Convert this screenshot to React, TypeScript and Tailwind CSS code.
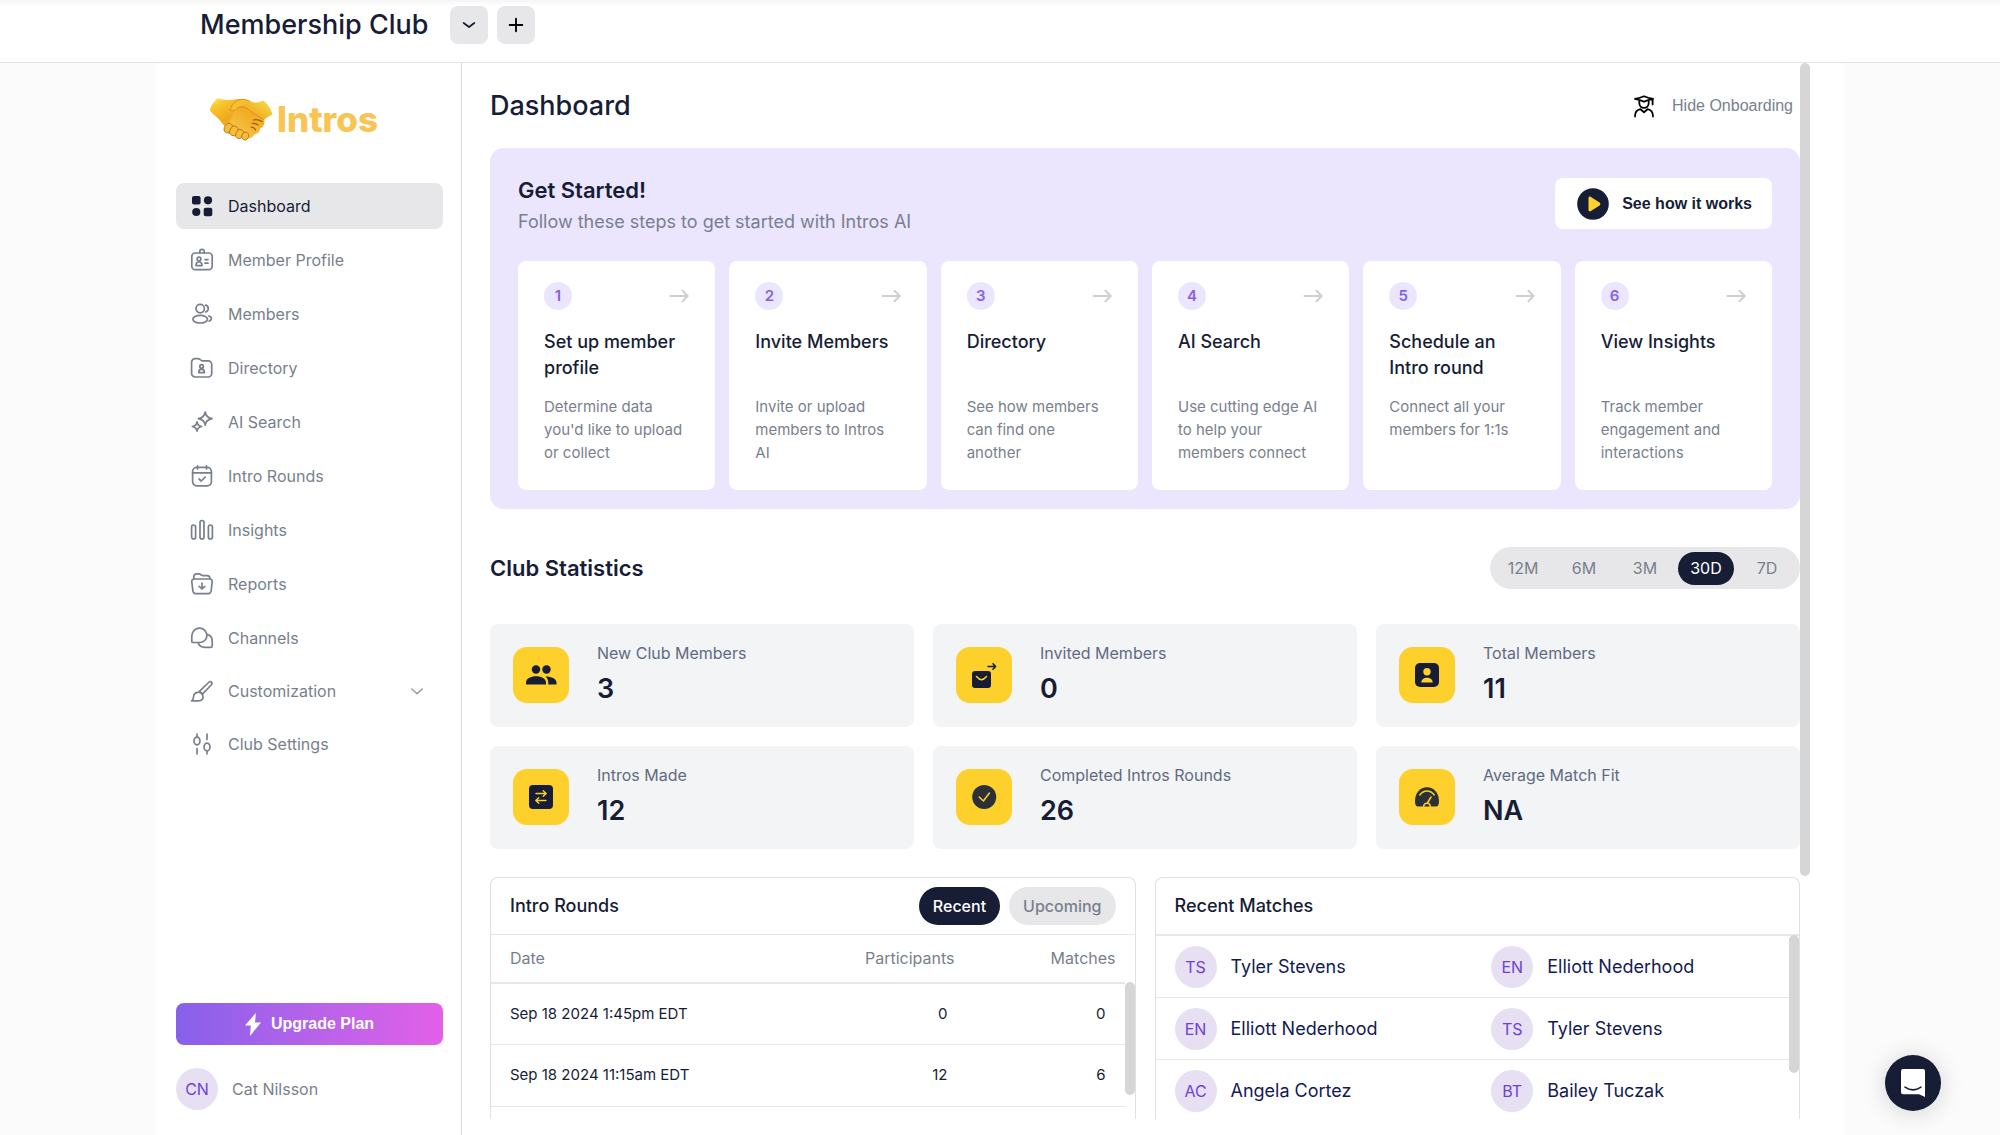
import type { ReactNode } from "react";

type IconProps = { className?: string; children: ReactNode };

function LineIcon({ className = "size-6", children }: IconProps) {
  return (
    <svg
      viewBox="0 0 24 24"
      className={className}
      fill="none"
      stroke="currentColor"
      strokeWidth="1.7"
      strokeLinecap="round"
      strokeLinejoin="round"
      aria-hidden="true"
    >
      {children}
    </svg>
  );
}

const navItems: { label: string; icon: ReactNode; expandable?: boolean }[] = [
  {
    label: "Dashboard",
    icon: (
      <g fill="currentColor" stroke="none">
        <rect x="2" y="2" width="8.6" height="8.6" rx="2" />
        <circle cx="18" cy="6.3" r="4.1" />
        <circle cx="6.3" cy="18" r="4.1" />
        <rect x="13.7" y="13.7" width="8.6" height="8.6" rx="2" />
      </g>
    ),
  },
  {
    label: "Member Profile",
    icon: (
      <>
        <rect x="1.8" y="5" width="20.4" height="16.6" rx="3.4" />
        <path d="M9.8 4.8V3.6a2.2 2.2 0 0 1 4.4 0v1.2" />
        <circle cx="9" cy="11" r="1.9" />
        <path d="M6 17.6c0-2.4 1.2-3.6 3-3.6s3 1.2 3 3.6Z" />
        <path d="M15 11.6h3M15 15.2h3" />
      </>
    ),
  },
  {
    label: "Members",
    icon: (
      <>
        <circle cx="10.2" cy="6.6" r="4.2" />
        <ellipse cx="10.2" cy="17.2" rx="7.3" ry="3.8" />
        <path d="M15.6 3.2a3.5 3.5 0 0 1 0 6.8" />
        <path d="M18.8 14c1.6.5 2.6 1.4 2.6 2.6 0 1.1-.8 2-2.2 2.5" />
      </>
    ),
  },
  {
    label: "Directory",
    icon: (
      <>
        <path d="M1.6 17.4V6.2A3.6 3.6 0 0 1 5.2 2.6h2.5c1 0 1.9.4 2.6 1.1l.6.5c.5.4 1.1.7 1.8.7h5.4a3.6 3.6 0 0 1 3.6 3.6v8.9a3.6 3.6 0 0 1-3.6 3.6H5.2a3.6 3.6 0 0 1-3.6-3.6Z" />
        <circle cx="11.6" cy="10.4" r="1.8" />
        <path d="M8.8 16.6c0-2.2 1.1-3.4 2.8-3.4s2.8 1.2 2.8 3.4Z" />
      </>
    ),
  },
  {
    label: "AI Search",
    icon: (
      <>
        <path d="M15.2 2c.6 4 2.3 5.9 6.8 6.6-4.5.7-6.2 2.6-6.8 6.6-.6-4-2.3-5.900-6.800-6.600 4.500-.700 6.200-2.600 6.800-6.600Z" />
        <path d="M7 11.800c.4 2.800 1.600 4.200 4.600 4.700-3 .5-4.200 1.900-4.600 4.700-.4-2.800-1.600-4.200-4.600-4.700 3-.5 4.200-1.900 4.600-4.700Z" />
      </>
    ),
  },
  {
    label: "Intro Rounds",
    icon: (
      <>
        <rect x="2.600" y="3.400" width="18.800" height="18.400" rx="4.200" />
        <path d="M2.600 8.800h18.800M7.500 1.800v3.200M16.500 1.800v3.200" />
        <path d="m9 15 2.200 2 4-3.800" />
      </>
    ),
  },
  {
    label: "Insights",
    icon: (
      <>
        <rect x="1.600" y="7" width="4" height="14" rx="2" />
        <rect x="10" y="2.500" width="4" height="18.500" rx="2" />
        <rect x="18.400" y="7" width="4" height="14" rx="2" />
      </>
    ),
  },
  {
    label: "Reports",
    icon: (
      <>
        <path d="M1.800 9.600c-.2-1.500.8-2.600 2.200-2.600h16c1.400 0 2.400 1.100 2.200 2.600l-1 8.700c-.2 2-1.700 3.400-3.700 3.400h-11c-2 0-3.500-1.400-3.700-3.400Z" />
        <path d="M3.800 6.800V5a3.200 3.200 0 0 1 3.200-3.200h1.800c.9 0 1.700.4 2.300 1l.3.2c.4.4 1 .6 1.600.6h4c1.700 0 3 1.300 3 3.200" />
        <path d="M12 11v5.800M9.200 14.300 12 17l2.800-2.700" />
      </>
    ),
  },
  {
    label: "Channels",
    icon: (
      <>
        <path d="M1.800 15.600V9.800a7.800 7.800 0 0 1 7.800-7.600 7.300 7.300 0 0 1 7.300 7.300c0 4-3.300 7-7.300 7H2.700a.9.900 0 0 1-.9-.9Z" />
        <path d="M17 8.400c3 .7 5.200 3.300 5.200 6.500v5.200c0 .7-.5 1.200-1.200 1.200h-6c-3.300 0-6-1.800-6.900-4.600" />
      </>
    ),
  },
  {
    label: "Customization",
    expandable: true,
    icon: (
      <>
        <path d="M1.600 21.800c2-1 1.700-2.300 1.900-4.300a4.800 4.800 0 0 1 9.200-1.300c1.200 3.200-.8 5.600-4.300 5.600Z" />
        <path d="m9.600 12.200 2.800 3 8.800-9.200c.9-1 1.200-1.900.3-2.800s-1.900-.6-2.800.3Z" />
      </>
    ),
  },
  {
    label: "Club Settings",
    icon: (
      <>
        <ellipse cx="7" cy="9" rx="3" ry="3.800" />
        <path d="M7 2.200v3M7 16.500v5.300" />
        <ellipse cx="17" cy="15" rx="3" ry="3.800" />
        <path d="M17 2.200v5.300M17 18.800v3" />
      </>
    ),
  },
];

const steps = [
  { title: "Set up member profile", text: "Determine data you'd like to upload or collect" },
  { title: "Invite Members", text: "Invite or upload members to Intros AI" },
  { title: "Directory", text: "See how members can find one another" },
  { title: "AI Search", text: "Use cutting edge AI to help your members connect" },
  { title: "Schedule an Intro round", text: "Connect all your members for 1:1s" },
  { title: "View Insights", text: "Track member engagement and interactions" },
];

const navy = "#161d35";
const yellow = "#fdd02c";

const stats: { label: string; value: string; icon: ReactNode }[] = [
  {
    label: "New Club Members",
    value: "3",
    icon: (
      <g fill={navy}>
        <circle cx="23" cy="22.500" r="4.200" />
        <circle cx="33.500" cy="22.500" r="4.200" />
        <path d="M13 37.600v-2c0-4 4.500-6.400 10-6.400s10 2.400 10 6.400v2Z" />
        <path d="M35.300 37.600v-2.200c0-2.500-1-4.500-2.800-6 6 0 11 2.200 11 6.200v2Z" />
      </g>
    ),
  },
  {
    label: "Invited Members",
    value: "0",
    icon: (
      <>
        <rect x="16" y="24" width="19" height="17" rx="3" fill={navy} />
        <path d="M20.500 29.500c3.600 4.300 6.400 4.300 10 0" fill="none" stroke={yellow} strokeWidth="1.500" strokeLinecap="round" />
        <path d="M32 19.500h7.500M37 16.800l2.600 2.700-2.600 2.700" fill="none" stroke={navy} strokeWidth="1.600" strokeLinecap="round" strokeLinejoin="round" />
      </>
    ),
  },
  {
    label: "Total Members",
    value: "11",
    icon: (
      <>
        <rect x="16" y="16" width="24" height="24" rx="5" fill={navy} />
        <g fill={yellow}>
          <circle cx="28" cy="24.800" r="3.700" />
          <path d="M22.300 35.500c0-3 2.500-4.800 5.700-4.800s5.700 1.800 5.700 4.800Z" />
        </g>
      </>
    ),
  },
  {
    label: "Intros Made",
    value: "12",
    icon: (
      <>
        <rect x="16" y="16" width="24" height="24" rx="4" fill={navy} />
        <path d="M23 24.500h10M30.200 21.700l3 2.800-3 2.800M33 31.500H23M25.800 28.700l-3 2.800 3 2.800" fill="none" stroke={yellow} strokeWidth="1.400" strokeLinecap="round" strokeLinejoin="round" />
      </>
    ),
  },
  {
    label: "Completed Intros Rounds",
    value: "26",
    icon: (
      <>
        <circle cx="28.200" cy="28" r="12" fill="#2d3137" />
        <path d="m23.200 28 4.200 4 6-8" fill="none" stroke={yellow} strokeWidth="1.500" strokeLinecap="round" strokeLinejoin="round" />
      </>
    ),
  },
  {
    label: "Average Match Fit",
    value: "NA",
    icon: (
      <>
        <path d="M19 37.500c-2 0-3-1.600-3-5.200C16 24 21 18.300 28 18.300s12 5.700 12 14c0 3.600-1 5.200-3 5.200Z" fill="#2d3137" />
        <g fill="none" stroke={yellow} strokeWidth="1.500" strokeLinecap="round">
          <path d="M20.800 26c3.800-5.400 10.600-5.400 14.400 0" />
          <path d="M28.400 34 32 28" />
          <path d="M24.600 37.500c.5-4.200 6.300-4.200 6.800 0" />
        </g>
      </>
    ),
  },
];

const ranges = ["12M", "6M", "3M", "30D", "7D"];

const rounds = [
  { date: "Sep 18 2024 1:45pm EDT", participants: 0, matches: 0 },
  { date: "Sep 18 2024 11:15am EDT", participants: 12, matches: 6 },
];

const matches = [
  ["Tyler Stevens", "Elliott Nederhood"],
  ["Elliott Nederhood", "Tyler Stevens"],
  ["Angela Cortez", "Bailey Tuczak"],
];

function Avatar({ name }: { name: string }) {
  const initials = name
    .split(" ")
    .map((word) => word[0])
    .join("");
  return (
    <span className="flex size-[42px] shrink-0 items-center justify-center rounded-full bg-[#e7e0f3] text-base text-[#6f3fd6]">
      {initials}
    </span>
  );
}

function Handshake() {
  return (
    <svg viewBox="0 0 64 44" className="h-11 w-16 shrink-0" aria-hidden="true">
      <defs>
        <linearGradient id="hand-left" x1="0" y1="0" x2="0.700" y2="1">
          <stop offset="0" stopColor="#fff06a" />
          <stop offset="0.250" stopColor="#f8c62c" />
          <stop offset="0.650" stopColor="#f0a81e" />
          <stop offset="1" stopColor="#f6b93c" />
        </linearGradient>
        <linearGradient id="hand-right" x1="1" y1="0" x2="0.200" y2="1">
          <stop offset="0" stopColor="#fbe04a" />
          <stop offset="0.450" stopColor="#f0ac24" />
          <stop offset="1" stopColor="#fbc74a" />
        </linearGradient>
      </defs>
      <path
        d="M8.500 1.200C5 4 1.500 9 .8 13.500c3.500 4.500 7.500 6.500 10.500 10.500 2 3 4.500 5 7.500 8L40 31l-6-27.500c-3-2-7-1.800-10-.8C18.500 3.500 14 2.500 8.500 1.200Z"
        fill="url(#hand-left)"
      />
      <path
        d="M54 3.500c4 2.500 8 8 9.500 14-3 1.500-6 3-8.500 5.500 1.500 4-1 7.500-4 8.500 0 3-2.500 5.500-5.500 5.500-1 3-4 5-7.500 4.500L18 30l12-24c3-3 8-4 12-1.500 4 2 8 1 12-1Z"
        fill="url(#hand-right)"
      />
      <path d="M29 10.500c-1.500 3.500-4 5-7.500 3.500-.5-4 2-8 6-10.500 4-2 9-2.500 13 .5" fill="#f7be30" />
      <path
        d="M40 4c-5-2.500-9-2-12.500 0-4 2.500-6 5.500-6 9.500 3.500 1 6-.5 8-3.500 4-.5 8 .5 11 3.500 4 3.500 9 5.500 14 9"
        fill="none"
        stroke="#d98c1a"
        strokeWidth="0.900"
        strokeLinecap="round"
      />
      <path
        d="M43 26.500c2.500-.5 4 0 6 1.500M44.500 23c3-1 6 0 8.500 1.500M42 30c2 0 3.500 1 4.500 3"
        fill="none"
        stroke="#9c5a0c"
        strokeWidth="1.200"
        strokeLinecap="round"
      />
      <g fill="#f7bd3a" stroke="#a8660f" strokeWidth="0.700">
        <rect x="15.500" y="26" width="7.500" height="10" rx="3.700" transform="rotate(24 19 31)" />
        <rect x="21" y="29" width="7.500" height="10" rx="3.700" transform="rotate(28 25 34)" />
        <rect x="27" y="32" width="7" height="9.500" rx="3.500" transform="rotate(28 30 37)" />
        <rect x="33" y="35" width="6.500" height="8" rx="3.200" transform="rotate(24 36 39)" />
      </g>
    </svg>
  );
}

function Sidebar() {
  return (
    <aside className="flex w-[305px] shrink-0 flex-col border-r border-[#dcdce0] pr-[18px] pl-[19px] text-[#797f8d]">
      <a href="#home" className="mt-8 ml-[33px] flex h-12 items-center gap-1" aria-label="Intros home">
        <Handshake />
        <span className="text-[35px] leading-none font-extrabold text-[#f8c454]">Intros</span>
      </a>
      <nav aria-label="Main" className="mt-10 flex flex-col gap-2">
        {navItems.map((item, i) => (
          <a
            key={item.label}
            href="#nav"
            aria-current={i === 0 ? "page" : undefined}
            className={
              i === 0
                ? "flex h-[46px] items-center gap-[14px] rounded-lg bg-[#e7e7e9] px-[14px] text-base text-[#161d35]"
                : item.expandable
                  ? "flex h-11 items-center gap-[14px] rounded-lg px-[14px] text-base"
                  : "flex h-[46px] items-center gap-[14px] rounded-lg px-[14px] text-base"
            }
          >
            <LineIcon className="size-6 shrink-0">{item.icon}</LineIcon>
            <span className="grow">{item.label}</span>
            {item.expandable && (
              <LineIcon className="mr-1 size-4 text-[#9a9eaa]">
                <path d="m4 9 8 7 8-7" strokeWidth="2.200" />
              </LineIcon>
            )}
          </a>
        ))}
      </nav>
      <div className="mt-auto pb-[25px]">
        <button
          type="button"
          className="flex h-[42px] w-full items-center justify-center gap-[10px] rounded-lg bg-linear-to-r from-[#8660ea] to-[#e35fe8] font-['Liberation_Sans',sans-serif] text-base font-bold text-white"
        >
          <svg viewBox="0 0 16 23" className="h-[23px] w-4" fill="currentColor" aria-hidden="true">
            <path d="M10.800 0 0 12.600h5.800L5 23 16 9.400h-5.900Z" />
          </svg>
          Upgrade Plan
        </button>
        <a href="#account" className="mt-[23px] flex items-center gap-[14px] text-base">
          <Avatar name="Cat Nilsson" />
          Cat Nilsson
        </a>
      </div>
    </aside>
  );
}

function GetStarted() {
  return (
    <section className="rounded-[14px] bg-[#ebe5fe] px-7 pt-[30px] pb-[19px]">
      <div className="flex items-start justify-between">
        <div>
          <h2 className="text-[22px] leading-6 font-semibold">Get Started!</h2>
          <p className="mt-2 text-lg leading-6 text-[#797f8d]">Follow these steps to get started with Intros AI</p>
        </div>
        <button
          type="button"
          className="flex h-[51px] items-center gap-[13px] rounded-lg bg-white pr-5 pl-[22px] font-['Liberation_Sans',sans-serif] text-base font-bold"
        >
          <svg viewBox="0 0 32 32" className="size-8" aria-hidden="true">
            <circle cx="16" cy="16" r="15.800" fill={navy} />
            <path d="M11.500 10.200c0-1.300 1.300-2 2.400-1.300l8.700 5.700c1 .7 1 2.100 0 2.800l-8.700 5.700c-1.100.7-2.400 0-2.400-1.300Z" fill={yellow} />
          </svg>
          See how it works
        </button>
      </div>
      <ol className="mt-[27px] grid grid-cols-6 gap-[14px]">
        {steps.map((step, i) => (
          <li key={step.title}>
            <a href="#step" className="block h-[229px] rounded-lg bg-white px-[26px] pt-[21px]">
              <div className="flex items-center justify-between">
                <span className="flex size-7 items-center justify-center rounded-full bg-[#ebe5fe] text-[15px] font-semibold text-[#8660ea]">
                  {i + 1}
                </span>
                <svg
                  viewBox="0 0 20 14"
                  className="h-[14px] w-5"
                  fill="none"
                  stroke="#cfcfd2"
                  strokeWidth="2"
                  strokeLinecap="round"
                  strokeLinejoin="round"
                  aria-hidden="true"
                >
                  <path d="M1.500 7h17M13.500 1.800 18.700 7l-5.200 5.200" />
                </svg>
              </div>
              <h3 className="mt-[19px] h-[52px] text-lg leading-[26px] font-medium">{step.title}</h3>
              <p className="mt-[14px] text-[15px] leading-[23px] text-[#797f8d]">{step.text}</p>
            </a>
          </li>
        ))}
      </ol>
    </section>
  );
}

function Statistics() {
  return (
    <section>
      <div className="mt-[38px] flex items-center justify-between">
        <h2 className="text-[22px] leading-6 font-semibold">Club Statistics</h2>
        <div role="group" aria-label="Period" className="flex h-[42px] items-center gap-[5px] rounded-full bg-[#e7e7e9] px-[5px]">
          {ranges.map((range) => (
            <button
              key={range}
              type="button"
              aria-pressed={range === "30D"}
              className={
                range === "30D"
                  ? "h-[33px] w-14 rounded-full bg-[#161d35] text-base text-white"
                  : "h-[33px] w-14 rounded-full text-base text-[#797f8d]"
              }
            >
              {range}
            </button>
          ))}
        </div>
      </div>
      <div className="mt-[35px] grid grid-cols-3 gap-[19px]">
        {stats.map((stat) => (
          <div key={stat.label} className="flex h-[103px] items-start rounded-lg bg-[#f3f4f6] px-[23px] pt-[18px]">
            <svg viewBox="0 0 56 56" className="mt-[5px] size-14 shrink-0" aria-hidden="true">
              <rect width="56" height="56" rx="14" fill={yellow} />
              {stat.icon}
            </svg>
            <div className="ml-7">
              <div className="text-base leading-[22px] text-[#626a82]">{stat.label}</div>
              <div className="mt-[9px] text-[27px] leading-8 font-semibold">{stat.value}</div>
            </div>
          </div>
        ))}
      </div>
    </section>
  );
}

function IntroRounds() {
  return (
    <section className="relative overflow-hidden rounded-t-lg border border-b-0 border-[#dfe0e4]">
      <header className="flex h-14 items-center justify-between px-[19px]">
        <h2 className="text-lg font-medium">Intro Rounds</h2>
        <div className="flex gap-[9px]">
          <button type="button" className="h-[38px] rounded-full bg-[#161d35] px-[14px] text-base font-medium text-white">
            Recent
          </button>
          <button type="button" className="h-[38px] rounded-full bg-[#e7e7e9] px-[14px] text-base font-medium text-[#797f8d]">
            Upcoming
          </button>
        </div>
      </header>
      <table className="w-full border-collapse text-base">
        <thead>
          <tr className="h-12 border-t border-b-2 border-t-[#e7e7e9] border-b-[#e7e7e9] text-[#797f8d]">
            <th className="pl-[19px] text-left font-normal">Date</th>
            <th className="text-right font-normal">Participants</th>
            <th className="w-[180px] pr-[19px] text-right font-normal">Matches</th>
          </tr>
        </thead>
        <tbody>
          {rounds.map((round) => (
            <tr key={round.date} className="h-[62px] border-b border-[#e7e7e9] text-[15px]">
              <td className="pl-[19px]">{round.date}</td>
              <td className="pr-[7px] text-right">{round.participants}</td>
              <td className="pr-[29px] text-right">{round.matches}</td>
            </tr>
          ))}
        </tbody>
      </table>
      <div className="absolute top-[104px] right-0 bottom-0 w-[10px] bg-white">
        <div className="h-[113px] rounded-full bg-[#d6d6d6]" />
      </div>
    </section>
  );
}

function RecentMatches() {
  return (
    <section className="relative overflow-hidden rounded-t-lg border border-b-0 border-[#dfe0e4]">
      <header className="flex h-[58px] items-center border-b-2 border-[#e7e7e9] pl-[19px]">
        <h2 className="text-lg font-medium">Recent Matches</h2>
      </header>
      <ul className="pr-[10px] text-lg text-[#141a52]">
        {matches.map((pair) => (
          <li key={pair[0]} className="grid h-[62px] grid-cols-2 border-b border-[#e7e7e9]">
            {pair.map((name) => (
              <a key={name} href="#member" className="flex items-center gap-[14px] pl-[19px]">
                <Avatar name={name} />
                {name}
              </a>
            ))}
          </li>
        ))}
      </ul>
      <div className="absolute top-[57px] right-0 bottom-0 w-[10px]">
        <div className="h-[138px] rounded-full bg-[#d6d6d6]" />
      </div>
    </section>
  );
}

export default function App() {
  return (
    <div className="flex h-screen flex-col overflow-hidden bg-[#fbfbfb] font-[Inter,sans-serif] text-[#161d35]">
      <header className="h-[63px] shrink-0 border-b border-[#e2e3e8] bg-linear-to-b from-[#f6f6f6] to-white to-10%">
        <div className="mx-auto flex max-w-[1686px] items-center pt-[6px] pl-[43px]">
          <h1 className="text-[27px] leading-[38px] font-medium">Membership Club</h1>
          <button type="button" aria-label="Switch club" className="ml-[21px] flex size-[38px] items-center justify-center rounded-lg bg-[#e7e7e9]">
            <LineIcon className="size-4">
              <path d="m4 9 8 6 8-6" strokeWidth="2.600" />
            </LineIcon>
          </button>
          <button type="button" aria-label="Add club" className="ml-[9px] flex size-[38px] items-center justify-center rounded-lg bg-[#e7e7e9] text-black">
            <LineIcon className="size-4">
              <path d="M12 2.500v19M2.500 12h19" strokeWidth="2.800" />
            </LineIcon>
          </button>
        </div>
      </header>
      <div className="mx-auto flex min-h-0 w-full max-w-[1686px] grow bg-white">
        <Sidebar />
        <main className="relative flex min-w-0 grow flex-col overflow-hidden pr-[43px] pb-4 pl-7">
          <div className="flex h-[85px] shrink-0 items-center justify-between pr-[7px]">
            <h1 className="text-[27px] leading-8 font-medium">Dashboard</h1>
            <button type="button" className="flex items-center gap-4 font-['Liberation_Sans',sans-serif] text-base text-[#797f8d]">
              <svg
                viewBox="0 0 24 24"
                className="size-6"
                fill="none"
                stroke="#000"
                strokeWidth="1.800"
                strokeLinecap="round"
                strokeLinejoin="round"
                aria-hidden="true"
              >
                <path d="M3 5c3-.6 6-1.400 9-2.800 3 1.400 6 2.200 9 2.800-3 .9-6 1.300-9 2.800-3-1.500-6-1.900-9-2.800ZM20.600 5.400v5" />
                <path d="M7.300 7.300v1.700c0 2.900 2 4.900 4.700 4.900s4.700-2 4.700-4.900V7.300" />
                <path d="M3 22.600c0-4.400 1.800-6.800 5.400-7.400l3.600 3 3.600-3c3.600.6 5.400 3 5.400 7.400" />
              </svg>
              Hide Onboarding
            </button>
          </div>
          <div className="min-h-0 grow overflow-hidden">
            <GetStarted />
            <Statistics />
            <div className="mt-7 grid h-[300px] grid-cols-2 gap-[19px]">
              <IntroRounds />
              <RecentMatches />
            </div>
          </div>
          <div className="absolute top-0 right-[33px] h-[813px] w-[10px] rounded-full bg-[#d6d6d6]" />
        </main>
      </div>
      <button
        type="button"
        aria-label="Open chat"
        className="fixed right-[59px] bottom-6 flex size-14 items-center justify-center rounded-full bg-[#161d35] shadow-[0_2px_24px_rgba(0,0,0,0.16)]"
      >
        <svg viewBox="0 0 26 30" className="h-[30px] w-[26px]" aria-hidden="true">
          <path d="M3 1h20a2 2 0 0 1 2 2v26l-6-2.800H3a2 2 0 0 1-2-2V3a2 2 0 0 1 2-2Z" fill="#fff" />
          <path d="M5 19.200c5 3.400 11 3.400 16 0" fill="none" stroke={navy} strokeWidth="1.600" strokeLinecap="round" />
        </svg>
      </button>
    </div>
  );
}
